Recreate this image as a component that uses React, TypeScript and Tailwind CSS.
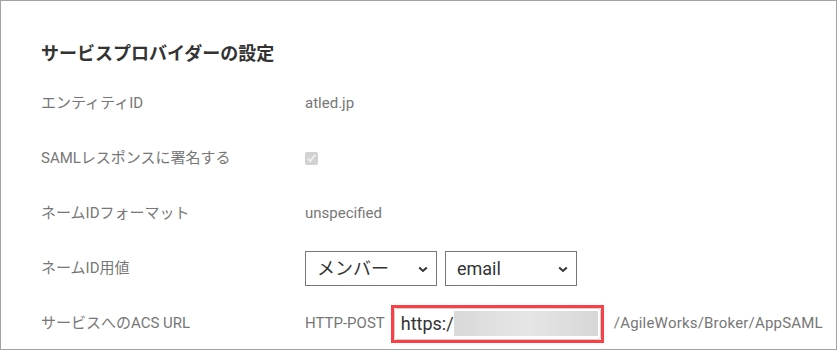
import type { ReactNode } from 'react';

// Service provider settings panel (SAML)

const FONT = "font-['Roboto','Noto_Sans_CJK_JP',sans-serif]";

function Row({ label, children }: { label: string; children: ReactNode }) {
  return (
    <div className="flex h-[55px] items-center">
      <div className="w-[264px] shrink-0 text-[15px] text-[#777]">{label}</div>
      <div className="flex items-center text-[15px] text-[#777]">{children}</div>
    </div>
  );
}

function Select({ value }: { value: string }) {
  return (
    <div className="flex h-[35px] w-[132px] items-center justify-between border border-[#767676] bg-white pl-[11px] pr-[8px] text-[18px] text-[#333]">
      <span>{value}</span>
      <svg width="10" height="7" viewBox="0 0 10 7" className="mt-[1px]">
        <path d="M1.2 1.5 L5 5 L8.8 1.5" fill="none" stroke="#333" strokeWidth="2" />
      </svg>
    </div>
  );
}

export default function App() {
  return (
    <div className={`h-[352px] w-[838px] bg-white ${FONT}`}>
      <div className="h-[350px] w-[837px] border border-[#a3a3a3] pl-[40px] pt-[40px]">
        <h2 className="h-[26px] text-[18px] font-bold leading-[26px] text-[#333]">
          サービスプロバイダーの設定
        </h2>
        <div className="mt-[9px]">
          <Row label="エンティティID">atled.jp</Row>
          <Row label="SAMLレスポンスに署名する">
            <input type="checkbox" checked disabled readOnly className="h-[13px] w-[13px]" />
          </Row>
          <Row label="ネームIDフォーマット">unspecified</Row>
          <Row label="ネームID用値">
            <div className="flex gap-[8px]">
              <Select value="メンバー" />
              <Select value="email" />
            </div>
          </Row>
          <Row label="サービスへのACS URL">
            <span>HTTP-POST</span>
            <div className="ml-[6px] h-[38px] w-[213px] border-[3px] border-[#fa4047]">
              <div className="flex h-full items-center rounded-[3px] border border-[#cfcfcf] bg-white pl-[6px] pr-[2px]">
                <span className="text-[18px] text-[#333]">https:/</span>
                <div className="h-[25px] flex-1 bg-gradient-to-r from-[#d9d9d9] via-[#e6e6e6] to-[#d7d7d7]" />
              </div>
            </div>
            <span className="ml-[10px] tracking-[0.2px]">/AgileWorks/Broker/AppSAML</span>
          </Row>
        </div>
      </div>
    </div>
  );
}
